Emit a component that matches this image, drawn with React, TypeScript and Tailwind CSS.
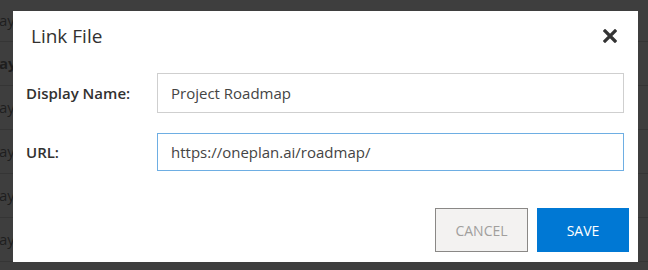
const rows = [
  { label: "ay", bold: false, h: "h-[42px]" },
  { label: "ay", bold: true, h: "h-[44px]" },
  { label: "ay", bold: false, h: "h-[44px]" },
  { label: "ay", bold: false, h: "h-[44px]" },
  { label: "ay", bold: false, h: "h-[44px]" },
  { label: "ay", bold: false, h: "h-[44px]" },
];

function CloseIcon() {
  return (
    <svg width="14" height="14" viewBox="0 0 14 14" aria-hidden="true">
      <path d="M2 2 L12 12 M12 2 L2 12" stroke="#333333" strokeWidth="3.2" strokeLinecap="square" />
    </svg>
  );
}

export default function App() {
  return (
    <div
      className="relative w-[648px] h-[270px] overflow-hidden bg-[#3e3e3e]"
      style={{ fontFamily: '"Open Sans", "Noto Sans", sans-serif' }}
    >
      {/* page behind the overlay */}
      <div className="flex flex-col">
        {rows.map((r, i) => (
          <div
            key={i}
            className={`${r.h} flex items-center border-b border-[#353535] text-[15px] text-[#1e1e1e] ${r.bold ? "font-bold" : ""}`}
          >
            <span className="-ml-[1px]">{r.label}</span>
          </div>
        ))}
      </div>

      {/* dialog */}
      <div className="absolute left-[13px] top-[11px] w-[625px] h-[251px] bg-white flex flex-col">
        <div className="flex items-center justify-between h-[50px] pl-[18px] pr-[21px]">
          <h2 className="text-[19px] text-[#323130]">Link File</h2>
          <button className="flex items-center justify-center">
            <CloseIcon />
          </button>
        </div>

        <div className="flex flex-col gap-[20px] pl-[13px] pr-[14px] pt-[12px]">
          <div className="flex items-center">
            <label className="w-[131px] text-[15px] font-semibold text-[#323130]">Display Name:</label>
            <input
              className="flex-1 h-[40px] border border-[#cfcfcf] px-[13px] text-[15px] text-[#444] outline-none"
              defaultValue="Project Roadmap"
            />
          </div>
          <div className="flex items-center">
            <label className="w-[131px] text-[15px] font-semibold text-[#323130]">URL:</label>
            <input
              className="flex-1 h-[38px] border border-[#6eaee3] px-[13px] text-[15px] text-[#444] outline-none"
              defaultValue="https://oneplan.ai/roadmap/"
            />
          </div>
        </div>

        <div className="mt-auto flex justify-end gap-[9px] pr-[9px] pb-[10px]">
          <button className="w-[93px] h-[44px] bg-[#f3f2f1] border border-[#8a8886] text-[14px] text-[#a19f9d]">
            CANCEL
          </button>
          <button className="w-[92px] h-[44px] bg-[#0078d4] text-[14px] text-white">SAVE</button>
        </div>
      </div>
    </div>
  );
}
